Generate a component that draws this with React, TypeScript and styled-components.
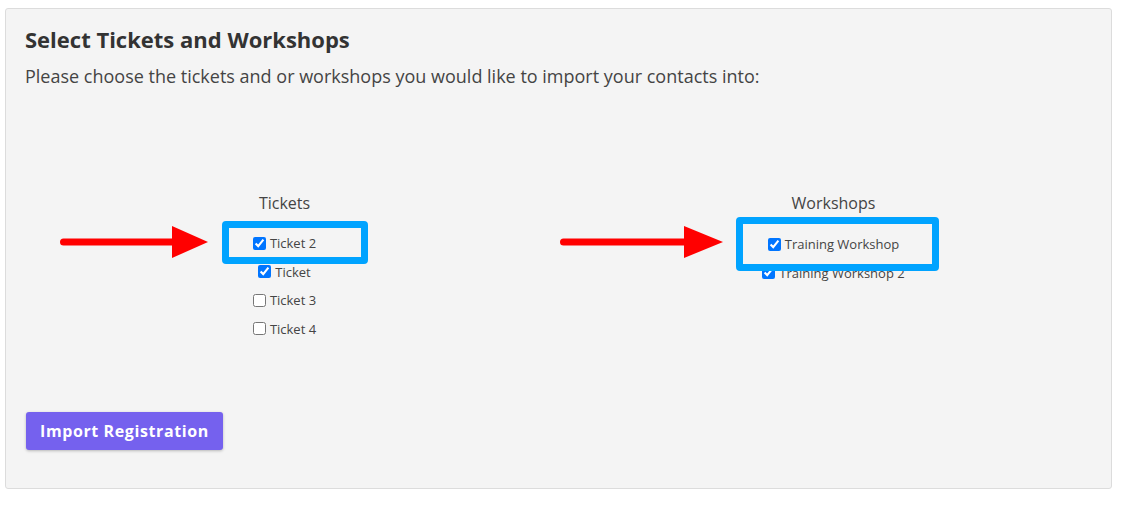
import React from "react";
import styled, { createGlobalStyle } from "styled-components";

const GlobalStyle = createGlobalStyle`
  body {
    margin: 0;
    background: #ffffff;
    font-family: "Open Sans", "Liberation Sans", sans-serif;
    color: #333;
  }
`;

const Page = styled.div`
  position: relative;
  width: 1133px;
  height: 520px;
  padding: 8px 0 0 5px;
  box-sizing: border-box;
`;

const Panel = styled.section`
  width: 1107px;
  height: 481px;
  box-sizing: border-box;
  background: #f4f4f4;
  border: 1px solid #dcdcdc;
  border-radius: 3px;
  padding: 17px 20px 0 19px;
  display: flex;
  flex-direction: column;
`;

const Title = styled.h2`
  margin: 0 0 11px;
  font-size: 22px;
  line-height: 26px;
  font-weight: 700;
  color: #333;
`;

const Intro = styled.p`
  margin: 0;
  font-size: 18px;
  line-height: 26px;
  color: #444;
`;

const Columns = styled.div`
  display: grid;
  grid-template-columns: repeat(2, 549px);
  margin: 102px 0 0 -15px;
`;

const Column = styled.div`
  display: flex;
  flex-direction: column;
  align-items: center;
`;

const ColumnTitle = styled.h3<{ $gap?: number }>`
  margin: 0 0 ${(p) => p.$gap ?? 14}px;
  font-size: 16px;
  line-height: 24px;
  font-weight: 400;
  color: #444;
`;

const Option = styled.label`
  display: flex;
  align-items: center;
  gap: 4px;
  height: 28.5px;
  font-size: 13px;
  color: #444;
  input {
    margin: 0;
    width: 13px;
    height: 13px;
    accent-color: #0075ff;
  }
`;

const Footer = styled.div`
  margin-top: auto;
  padding-bottom: 38px;
  padding-left: 1px;
`;

const Button = styled.button`
  height: 38px;
  padding: 0 14px;
  border: none;
  border-radius: 3px;
  background: #7561ee;
  color: #fff;
  font-family: "Open Sans", "Liberation Sans", sans-serif;
  font-size: 16px;
  font-weight: 700;
  letter-spacing: 0.6px;
  box-shadow: 0 1px 3px rgba(0, 0, 0, 0.25);
  cursor: pointer;
`;

const Highlight = styled.div<{ $x: number; $y: number; $w: number; $h: number }>`
  position: absolute;
  left: ${(p) => p.$x}px;
  top: ${(p) => p.$y}px;
  width: ${(p) => p.$w}px;
  height: ${(p) => p.$h}px;
  box-sizing: border-box;
  border: 7px solid #00a3ff;
  border-radius: 4px;
  pointer-events: none;
`;

const ArrowSvg = styled.svg<{ $x: number; $y: number }>`
  position: absolute;
  left: ${(p) => p.$x}px;
  top: ${(p) => p.$y}px;
  pointer-events: none;
`;

function Arrow({ x, y, shaft, head }: { x: number; y: number; shaft: number; head: number }) {
  const w = shaft + head;
  return (
    <ArrowSvg $x={x} $y={y} width={w} height={34} viewBox={`0 0 ${w} 34`}>
      <line x1={3.5} y1={17} x2={shaft + 2} y2={17} stroke="#ff0000" strokeWidth={7} strokeLinecap="round" />
      <polygon points={`${shaft},1 ${w},17 ${shaft},33`} fill="#ff0000" />
    </ArrowSvg>
  );
}

const tickets = [
  { name: "Ticket 2", checked: true },
  { name: "Ticket", checked: true },
  { name: "Ticket 3", checked: false },
  { name: "Ticket 4", checked: false },
];

const workshops = [
  { name: "Training Workshop", checked: true },
  { name: "Training Workshop 2", checked: true },
];

export default function App() {
  return (
    <Page>
      <GlobalStyle />
      <Panel>
        <Title>Select Tickets and Workshops</Title>
        <Intro>Please choose the tickets and or workshops you would like to import your contacts into:</Intro>
        <Columns>
          <Column>
            <ColumnTitle>Tickets</ColumnTitle>
            {tickets.map((t) => (
              <Option key={t.name}>
                <input type="checkbox" defaultChecked={t.checked} />
                {t.name}
              </Option>
            ))}
          </Column>
          <Column>
            <ColumnTitle $gap={15}>Workshops</ColumnTitle>
            {workshops.map((w) => (
              <Option key={w.name}>
                <input type="checkbox" defaultChecked={w.checked} />
                {w.name}
              </Option>
            ))}
          </Column>
        </Columns>
        <Footer>
          <Button>Import Registration</Button>
        </Footer>
      </Panel>
      <Highlight $x={222} $y={221} $w={146} $h={43} />
      <Highlight $x={736} $y={217} $w={203} $h={54} />
      <Arrow x={60} y={225} shaft={112} head={36} />
      <Arrow x={560} y={225} shaft={124} head={39} />
    </Page>
  );
}
